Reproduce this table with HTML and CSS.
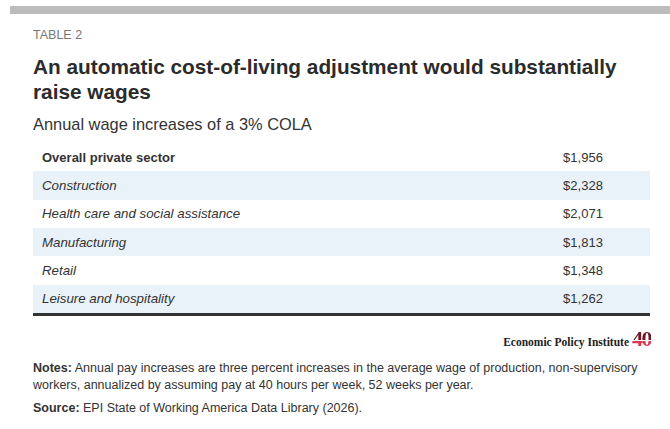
FILE: index.html
```html
<!DOCTYPE html>
<html>
<head>
<meta charset="utf-8">
<link rel="stylesheet" href="styles.css">
</head>
<body>
<div class="topbar"></div>
<div class="content">
  <div class="label">TABLE 2</div>
  <h1 class="title">An automatic cost-of-living adjustment would substantially raise wages</h1>
  <div class="subtitle">Annual wage increases of a 3% COLA</div>
  <div class="table">
    <div class="row head"><div class="name">Overall private sector</div><div class="val">$1,956</div></div>
    <div class="row alt"><div class="name">Construction</div><div class="val">$2,328</div></div>
    <div class="row"><div class="name">Health care and social assistance</div><div class="val">$2,071</div></div>
    <div class="row alt"><div class="name">Manufacturing</div><div class="val">$1,813</div></div>
    <div class="row"><div class="name">Retail</div><div class="val">$1,348</div></div>
    <div class="row alt"><div class="name">Leisure and hospitality</div><div class="val">$1,262</div></div>
  </div>
  <div class="logo">
    <span class="logo-name">Economic Policy Institute</span>
    <span class="logo-40">40</span>
  </div>
  <p class="note"><b>Notes:</b> Annual pay increases are three percent increases in the average wage of production, non-supervisory workers, annualized by assuming pay at 40 hours per week, 52 weeks per year.</p>
  <p class="note source"><b>Source:</b> EPI State of Working America Data Library (2026).</p>
</div>
</body>
</html>
```
FILE: styles.css
```css
html, body {
  margin: 0;
  padding: 0;
  background: #fff;
}
body {
  font-family: "Liberation Sans", Arial, sans-serif;
  color: #333;
  width: 670px;
  height: 429px;
  overflow: hidden;
}
.topbar {
  margin: 6px 0 0 10px;
  height: 8px;
  background: #bcbcbc;
}
.content {
  padding: 0 20px 0 33px;
}
.label {
  margin-top: 14px;
  font-size: 12.5px;
  line-height: 14px;
  color: #777;
}
.title {
  margin: 12px 0 0;
  font-size: 20.8px;
  line-height: 25px;
  font-weight: bold;
  color: #2b2b2b;
  width: 620px;
}
.subtitle {
  margin-top: 10px;
  font-size: 16.4px;
  line-height: 20px;
  color: #333;
}
.table {
  margin-top: 9px;
  width: 617px;
  border-bottom: 3px solid #333;
}
.row {
  display: flex;
  align-items: center;
  height: 28.33px;
  font-size: 13.3px;
  font-style: italic;
}
.row.head {
  font-style: normal;
  font-weight: bold;
  font-size: 13px;
}
.row.alt {
  background: #e9f1f9;
}
.name {
  flex: 1;
  padding-left: 9px;
}
.val {
  width: 134px;
  text-align: center;
  font-style: normal;
  font-weight: normal;
  font-size: 13px;
}
.logo {
  display: flex;
  justify-content: flex-end;
  align-items: flex-end;
  width: 618px;
  margin-top: 14px;
  height: 18px;
}
.logo-name {
  font-family: "Liberation Serif", "Times New Roman", serif;
  font-weight: bold;
  font-size: 11.5px;
  line-height: 12px;
  color: #222;
  margin-right: 3px;
}
.logo-40 {
  font-family: "Liberation Serif", "Times New Roman", serif;
  font-weight: bold;
  font-size: 22px;
  line-height: 18px;
  letter-spacing: -1.5px;
  color: transparent;
  background: linear-gradient(to bottom, #6e1626 0%, #6e1626 55%, #fff 55%, #fff 62%, #d8394f 62%, #d8394f 100%);
  -webkit-background-clip: text;
  background-clip: text;
}
.note {
  margin: 12px 0 0;
  font-size: 12.5px;
  line-height: 17px;
  color: #333;
}
.note.source {
  margin-top: 6px;
}
```
